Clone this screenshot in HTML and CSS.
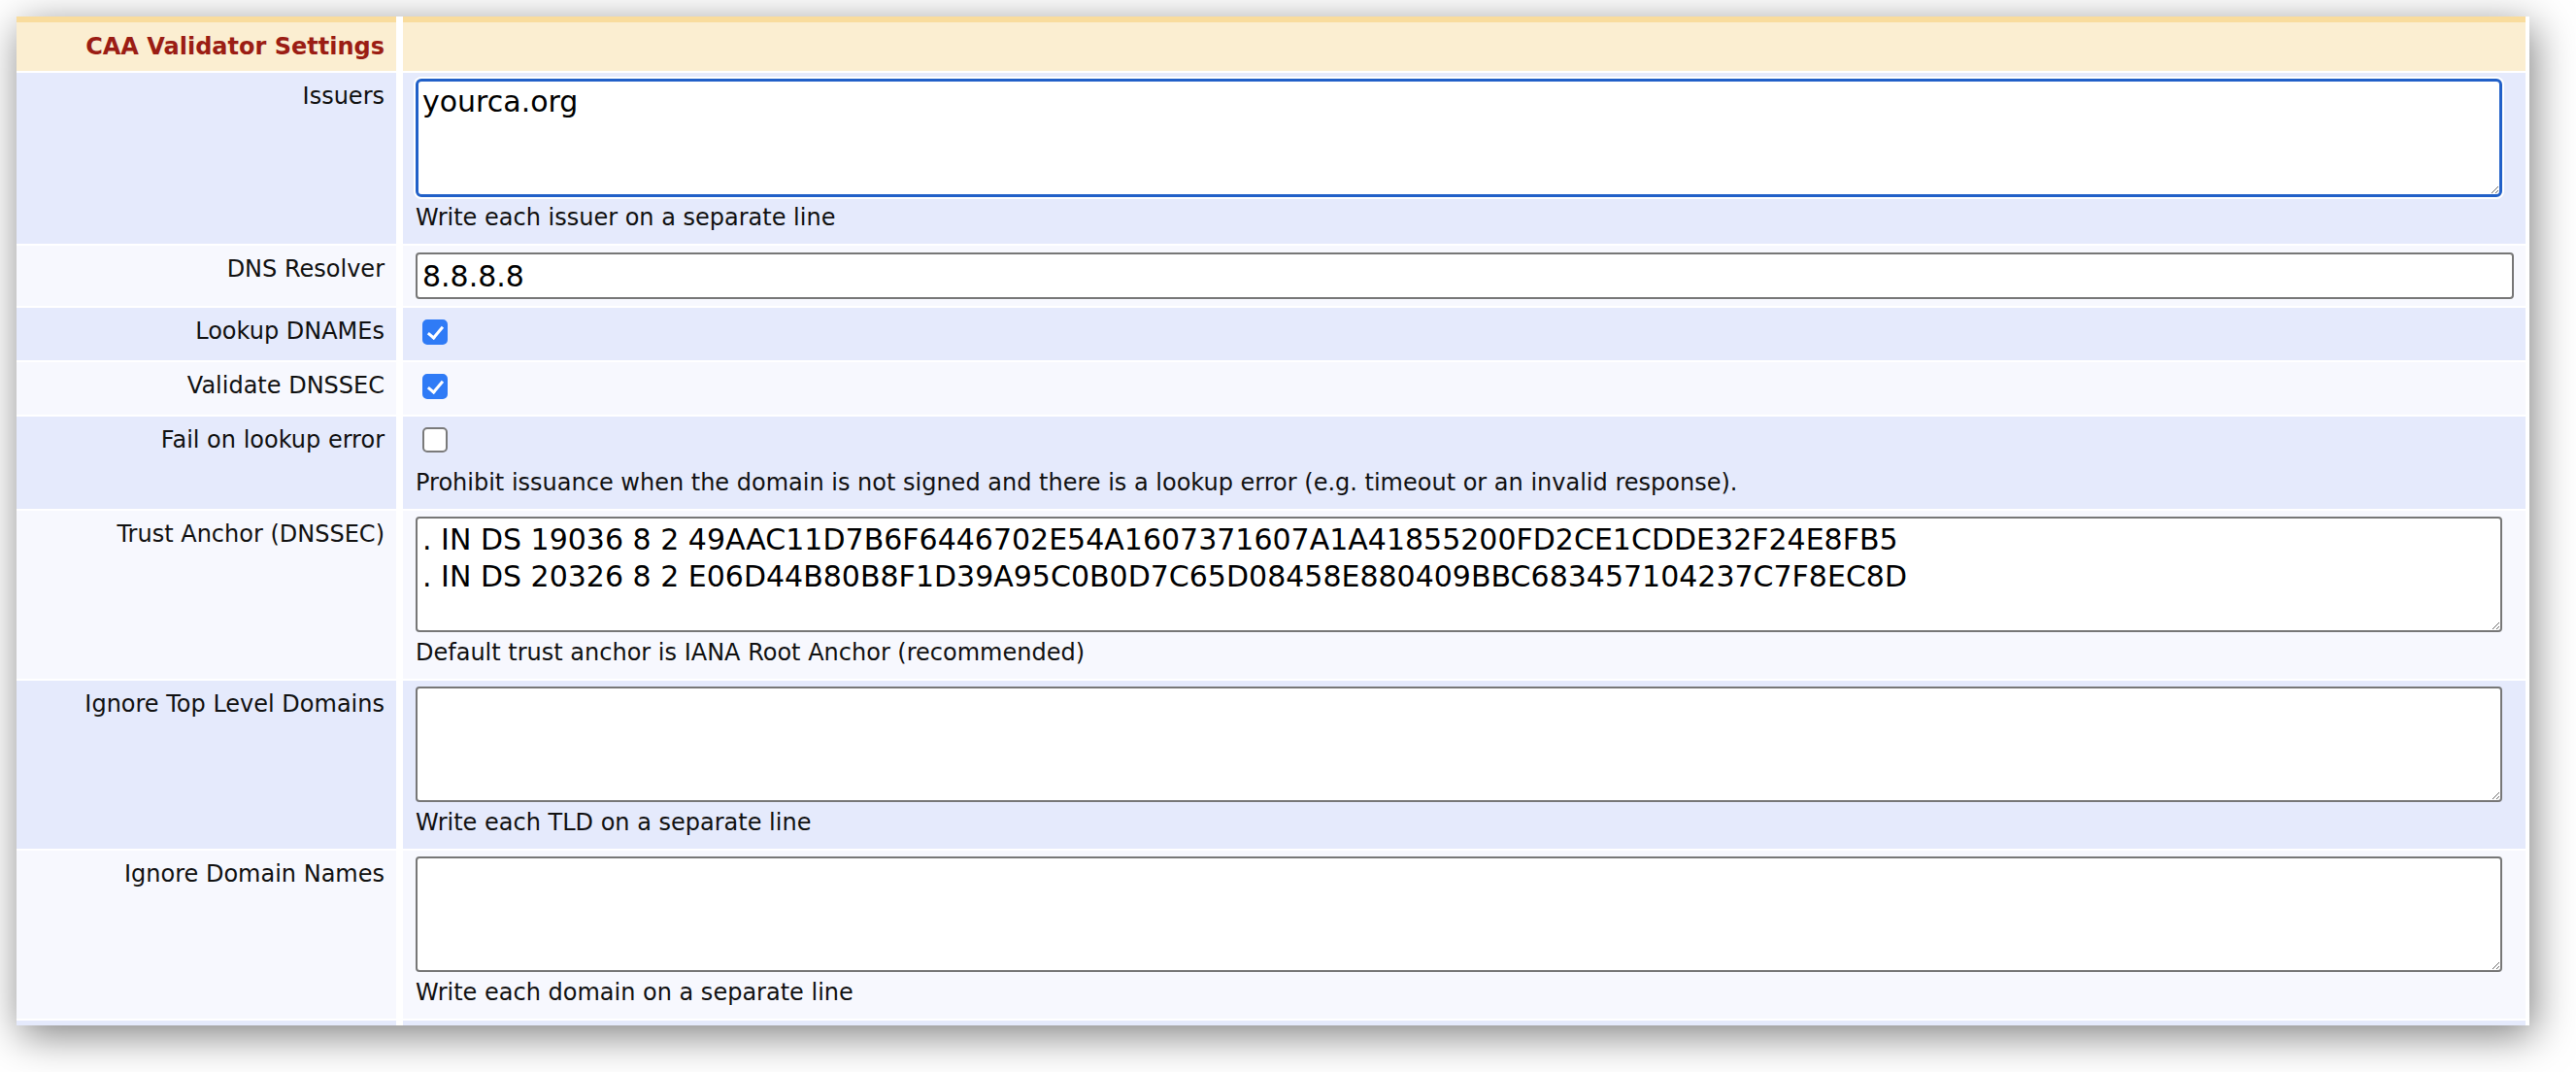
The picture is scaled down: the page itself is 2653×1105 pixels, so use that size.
FILE: index.html
```html
<!DOCTYPE html>
<html lang="en">
<head>
<meta charset="utf-8">
<title>CAA Validator Settings</title>
<link rel="stylesheet" href="styles.css">
</head>
<body>
<div class="panel">
  <div class="settings">
    <div class="cell label head">CAA Validator Settings</div>
    <div class="cell field head"></div>

    <div class="cell label dark">Issuers</div>
    <div class="cell field dark area-cell">
      <textarea class="area focused" spellcheck="false">yourca.org</textarea>
      <div class="help">Write each issuer on a separate line</div>
    </div>

    <div class="cell label light">DNS Resolver</div>
    <div class="cell field light input-cell">
      <input class="text-input" type="text" value="8.8.8.8">
    </div>

    <div class="cell label dark">Lookup DNAMEs</div>
    <div class="cell field dark check-cell">
      <input class="check" type="checkbox" checked>
    </div>

    <div class="cell label light">Validate DNSSEC</div>
    <div class="cell field light check-cell">
      <input class="check" type="checkbox" checked>
    </div>

    <div class="cell label dark">Fail on lookup error</div>
    <div class="cell field dark check-help-cell">
      <input class="check" type="checkbox">
      <div class="help help-after-check">Prohibit issuance when the domain is not signed and there is a lookup error (e.g. timeout or an invalid response).</div>
    </div>

    <div class="cell label light">Trust Anchor (DNSSEC)</div>
    <div class="cell field light area-cell">
      <textarea class="area" spellcheck="false">. IN DS 19036 8 2 49AAC11D7B6F6446702E54A1607371607A1A41855200FD2CE1CDDE32F24E8FB5
. IN DS 20326 8 2 E06D44B80B8F1D39A95C0B0D7C65D08458E880409BBC683457104237C7F8EC8D</textarea>
      <div class="help">Default trust anchor is IANA Root Anchor (recommended)</div>
    </div>

    <div class="cell label dark">Ignore Top Level Domains</div>
    <div class="cell field dark area-cell">
      <textarea class="area" spellcheck="false"></textarea>
      <div class="help">Write each TLD on a separate line</div>
    </div>

    <div class="cell label light">Ignore Domain Names</div>
    <div class="cell field light area-cell">
      <textarea class="area" spellcheck="false"></textarea>
      <div class="help">Write each domain on a separate line</div>
    </div>

    <div class="cell dark stub"></div>
    <div class="cell dark stub"></div>
  </div>
</div>
</body>
</html>
```
FILE: styles.css
```css
html, body {
  margin: 0;
  padding: 0;
  background: #ffffff;
}

body {
  padding: 17px 0 48px 17px;
  font-family: "DejaVu Sans", sans-serif;
  font-size: 24px;
  color: #111111;
}

.panel {
  width: 2588px;
  box-sizing: border-box;
  padding-right: 4px;
  background: #ffffff;
  box-shadow: 4px 10px 40px rgba(0, 0, 0, 0.5);
}

.settings {
  display: grid;
  grid-template-columns: 391px 1fr;
  column-gap: 7px;
  row-gap: 2px;
}

.cell {
  box-sizing: border-box;
  line-height: 29px;
}

.label {
  text-align: right;
  padding: 10px 12px 0 12px;
}

.field {
  padding: 0 12px 0 13px;
}

.head {
  background: #fbeed1;
  border-top: 6px solid #f9dc9d;
  height: 56px;
}

.label.head {
  padding-top: 11px;
  font-weight: bold;
  color: #9b1d14;
}

.dark {
  background: #e5eafc;
}

.light {
  background: #f7f8fe;
}

.stub {
  height: 5px;
}

.area-cell {
  padding-top: 6px;
  padding-bottom: 12px;
}

.area {
  display: block;
  box-sizing: border-box;
  width: calc(100% - 12px);
  height: 119px;
  margin: 0;
  padding: 3px 5px;
  border: 2px solid #777777;
  border-radius: 4px;
  background: #ffffff;
  font-family: "DejaVu Sans", sans-serif;
  font-size: 30px;
  line-height: 38px;
  color: #000000;
  resize: vertical;
  outline: none;
}

.area.focused {
  height: 122px;
  border: 3px solid #2160c8;
  border-radius: 6px;
  box-shadow: 0 0 0 2px #ffffff;
  padding: 2px 4px;
}

.help {
  margin-top: 7px;
  color: #111111;
}

.input-cell {
  padding-top: 7px;
  padding-bottom: 7px;
}

.text-input {
  display: block;
  box-sizing: border-box;
  width: 100%;
  height: 48px;
  margin: 0;
  padding: 0 5px;
  border: 2px solid #777777;
  border-radius: 4px;
  background: #ffffff;
  font-family: "DejaVu Sans", sans-serif;
  font-size: 30px;
  color: #000000;
  outline: none;
}

.check-cell {
  padding-top: 12px;
  padding-bottom: 16px;
}

.check-help-cell {
  padding-top: 11px;
  padding-bottom: 12px;
}

.check {
  -webkit-appearance: none;
  appearance: none;
  display: block;
  position: relative;
  box-sizing: border-box;
  width: 26px;
  height: 26px;
  margin: 0 0 0 7px;
  border: 2px solid #7a7a7a;
  border-radius: 5px;
  background: #ffffff;
}

.check:checked {
  border-color: #2f7bf6;
  background: #2f7bf6;
}

.check:checked::after {
  content: "";
  position: absolute;
  left: 7px;
  top: 2px;
  width: 6px;
  height: 13px;
  border-right: 3.5px solid #ffffff;
  border-bottom: 3.5px solid #ffffff;
  transform: rotate(40deg);
}

.help-after-check {
  margin-top: 17px;
}
```
